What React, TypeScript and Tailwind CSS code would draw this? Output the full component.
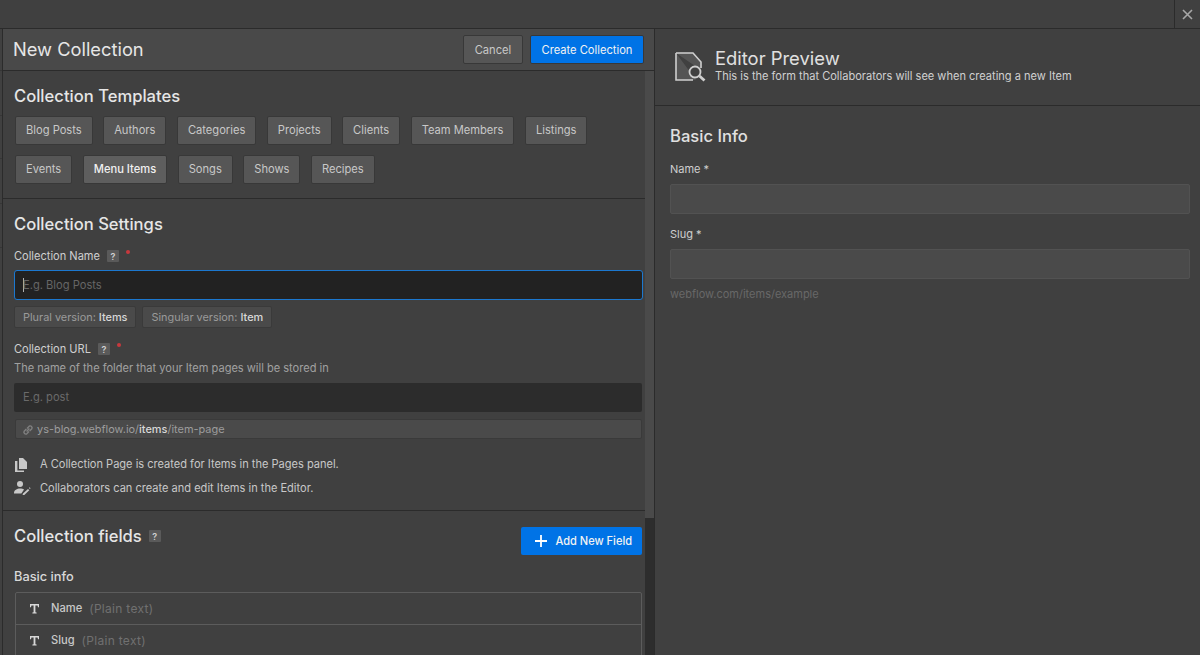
const row1 = ["Blog Posts", "Authors", "Categories", "Projects", "Clients", "Team Members", "Listings"];
const row2 = ["Events", "Menu Items", "Songs", "Shows", "Recipes"];
const sliverRows = ["h-[42px]", "h-[45px]", "h-[43px]", "h-[45px]", "h-[44px]"];

function TemplateButton({ label, active }: { label: string; active?: boolean }) {
  return (
    <div
      className={`flex h-[28.5px] items-center rounded-[2px] border border-[#383838] px-[10px] pt-px text-[11.15px] ${
        active ? "bg-[#5e5e5e] font-medium text-[#f0f0f0]" : "bg-[#565656] text-[#c8c8c8]"
      }`}
    >
      {label}
    </div>
  );
}

function Help() {
  return (
    <span className="flex h-[12px] w-[12px] items-center justify-center rounded-[1px] bg-[#5a5a5a] text-[9px] font-semibold leading-none text-[#d0d0d0]">
      ?
    </span>
  );
}

function Required() {
  return <span className="mb-[9px] h-[4px] w-[4px] rounded-full bg-[#c8383d]" />;
}

function Chip({ label, value }: { label: string; value: string }) {
  return (
    <div className="flex h-[22px] items-center gap-[3px] rounded-[2px] border border-[#3a3a3a] bg-[#4a4a4a] px-[8px] text-[10.9px] text-[#9a9a9a]">
      {label}
      <span className="font-medium text-[#d8d8d8]">{value}</span>
    </div>
  );
}

function FieldRow({ name, last }: { name: string; last?: boolean }) {
  return (
    <div className={`flex items-center border-[#5c5c5c] pl-[13px] text-[11.15px] ${last ? "h-[31px]" : "h-[32px] border-b"}`}>
      <svg width="11" height="11" viewBox="0 0 11 11" className="mr-[11px] fill-[#d8d8d8]">
        <path d="M1 1h9v3.2H9L8.6 2.6H6.4v6.6l1.2.3V10.4H3.4V9.5l1.2-.3V2.6H2.4L2 4.2H1z" />
      </svg>
      <span className="mr-[7px] font-medium text-[#c8c8c8]">{name}</span>
      <span className="text-[12px] tracking-[0.3px] text-[#707070]">(Plain text)</span>
    </div>
  );
}

export default function App() {
  return (
    <div className="flex h-[655px] w-[1200px] flex-col overflow-hidden bg-[#404040] font-['Inter',sans-serif] text-[#d9d9d9]">
      <div className="flex h-[29px] shrink-0 justify-end border-b border-[#2b2b2b]">
        <div className="flex w-[26px] items-center justify-center border-l border-[#2b2b2b]">
          <svg width="11" height="11" viewBox="0 0 11 11" className="stroke-[#a8a8a8]" strokeWidth="1.6">
            <path d="M1 1l9 9M10 1l-9 9" />
          </svg>
        </div>
      </div>

      <div className="flex min-h-0 flex-1">
        <div className="w-[3px] shrink-0 border-r border-[#2b2b2b]">
          {sliverRows.map((h, i) => (
            <div key={i} className={`${h} border-b border-[#363636]`} />
          ))}
        </div>

        <div className="flex w-[652px] shrink-0 flex-col border-r border-[#2b2b2b]">
          <div className="flex h-[42px] shrink-0 items-center justify-between border-b border-[#2b2b2b] bg-[#494949] pl-[10px] pr-[10px]">
            <div className="text-[18.3px] text-[#e6e6e6]">New Collection</div>
            <div className="flex gap-[7px]">
              <div className="flex h-[29px] w-[60px] items-center justify-center rounded-[2px] border border-[#383838] bg-[#565656] pt-px text-[11.15px] text-[#c8c8c8]">
                Cancel
              </div>
              <div className="flex h-[29px] w-[114px] items-center justify-center rounded-[2px] border border-[#383838] bg-[#0073e6] pt-px text-[11.15px] text-[#f2f2f2]">
                Create Collection
              </div>
            </div>
          </div>

          <div className="flex min-h-0 flex-1">
            <div className="min-w-0 flex-1">
              <div className="h-[128px] border-b border-[#2b2b2b] pl-[12px] pr-[2px] pt-[14px]">
                <div className="ml-[-1px] text-[16.6px] font-medium leading-[22px] text-[#e6e6e6]">Collection Templates</div>
                <div className="mt-[9px] flex gap-[10.5px]">
                  {row1.map((t) => (
                    <TemplateButton key={t} label={t} />
                  ))}
                </div>
                <div className="mt-[10.5px] flex gap-[10.5px]">
                  {row2.map((t) => (
                    <TemplateButton key={t} label={t} active={t === "Menu Items"} />
                  ))}
                </div>
              </div>

              <div className="h-[312px] border-b border-[#2b2b2b] pl-[11px] pr-[2px] pt-[14px]">
                <div className="text-[16.6px] font-medium leading-[22px] text-[#e6e6e6]">Collection Settings</div>
                <div className="mt-[14px] flex h-[14px] items-center gap-[7px] text-[11.05px] text-[#cfcfcf]">
                  Collection Name <Help /> <Required />
                </div>
                <div className="mt-[7px] flex h-[30px] items-center rounded-[3px] border border-[#1c78cf] bg-[#222222] pl-[8px] text-[11.15px] text-[#666666]">
                  <span className="mr-[-1px] h-[14px] w-px bg-[#b0b0b0]" />
                  E.g. Blog Posts
                </div>
                <div className="mt-[6px] flex gap-[6px]">
                  <Chip label="Plural version:" value="Items" />
                  <Chip label="Singular version:" value="Item" />
                </div>
                <div className="mt-[14px] flex h-[14px] items-center gap-[7px] text-[11.05px] text-[#cfcfcf]">
                  Collection URL <Help /> <Required />
                </div>
                <div className="mt-[5px] text-[11.05px] leading-[15px] text-[#a0a0a0]">
                  The name of the folder that your Item pages will be stored in
                </div>
                <div className="mr-[1px] mt-[7px] flex h-[29px] items-center rounded-[2px] bg-[#2c2c2c] pl-[9px] text-[11.15px] text-[#6a6a6a]">
                  E.g. post
                </div>
                <div className="mx-[1px] mt-[7px] flex h-[20px] items-center gap-[3px] rounded-[2px] border border-[#3a3a3a] bg-[#4a4a4a] pl-[6px] pt-px text-[10.95px] text-[#9c9c9c]">
                  <svg width="12" height="12" viewBox="0 0 12 12" fill="none" className="stroke-[#808080]" strokeWidth="1.4">
                    <path d="M4.6 7.4l2.8-2.8M4.4 5L2.2 7.2a1.9 1.9 0 0 0 2.6 2.6L7 7.6M7.6 7l2.2-2.2a1.9 1.9 0 0 0-2.6-2.6L5 4.4" />
                  </svg>
                  <span>
                    ys-blog.webflow.io/<span className="font-medium text-[#d8d8d8]">items</span>/item-page
                  </span>
                </div>
                <div className="mt-[16px] flex h-[18px] items-center pt-px text-[11.05px] text-[#c8c8c8]">
                  <svg width="12" height="14" viewBox="0 0 12 14" className="ml-[1px] mr-[13px] fill-[#c8c8c8]">
                    <path d="M4 0h4l4 4v7H4z" />
                    <path d="M0 3h2.4v9.4H9V14H0z" />
                  </svg>
                  A Collection Page is created for Items in the Pages panel.
                </div>
                <div className="mt-[6px] flex h-[18px] items-center text-[11.05px] text-[#c8c8c8]">
                  <svg width="17" height="14" viewBox="0 0 17 14" className="mr-[9px] fill-[#c8c8c8]">
                    <circle cx="6" cy="3" r="3" />
                    <path d="M0 12c0-3 3-4.6 6-4.6 1.6 0 3 .4 4 1L7.4 12.4H0z" />
                    <path d="M9 12.6l5-4.6 1.3 1.3-5 4.6-1.8.3zM15.6 6.2l1 1-.7.7-1-1z" />
                  </svg>
                  Collaborators can create and edit Items in the Editor.
                </div>
              </div>

              <div className="pl-[11px] pr-[3px]">
                <div className="flex h-[44px] items-end justify-between">
                  <div className="mb-[8px] flex items-center gap-[7px] text-[16.6px] font-medium leading-[22px] text-[#e6e6e6]">
                    Collection fields <Help />
                  </div>
                  <div className="flex h-[28px] w-[121px] items-center justify-end gap-[8px] rounded-[2px] bg-[#0073e6] pr-[10px] text-[11.05px] font-medium text-[#f2f2f2]">
                    <svg width="12" height="12" viewBox="0 0 12 12" className="stroke-white" strokeWidth="1.8">
                      <path d="M6 0v12M0 6h12" />
                    </svg>
                    Add New Field
                  </div>
                </div>
                <div className="mt-[14px] text-[12.8px] font-medium leading-[16px] text-[#d8d8d8]">Basic info</div>
                <div className="ml-[1px] mt-[7px] rounded-[2px] border border-[#5c5c5c]">
                  <FieldRow name="Name" />
                  <FieldRow name="Slug" last />
                </div>
              </div>
            </div>

            <div className="w-[9px] shrink-0 bg-[#2d2d2d]">
              <div className="h-[447px] bg-[#4a4a4a]" />
            </div>
          </div>
        </div>

        <div className="min-w-0 flex-1">
          <div className="flex h-[77px] items-center border-b border-[#2b2b2b] pl-[20px]">
            <svg width="31" height="30" viewBox="0 0 31 30" fill="none" className="mr-[9px]">
              <path d="M1 1h17l8 9v8M1 1v27h20" fill="#555555" />
              <path d="M1 1h17l8 9v6M1 1v27h17" stroke="#cfcfcf" strokeWidth="1.6" />
              <circle cx="20" cy="20" r="5.5" fill="#404040" stroke="#cfcfcf" strokeWidth="1.8" />
              <path d="M24.5 24l5 4.5" stroke="#cfcfcf" strokeWidth="2.8" />
            </svg>
            <div className="mb-[4px]">
              <div className="text-[18.4px] leading-[20px] text-[#e0e0e0]">Editor Preview</div>
              <div className="mt-[1px] text-[11.05px] leading-[14px] text-[#d0d0d0]">
                This is the form that Collaborators will see when creating a new Item
              </div>
            </div>
          </div>
          <div className="pl-[15px] pr-[10px] pt-[19px]">
            <div className="text-[16.6px] font-medium leading-[22px] text-[#e0e0e0]">Basic Info</div>
            <div className="mt-[14px] text-[11px] leading-[16px] text-[#cfcfcf]">Name *</div>
            <div className="mt-[7px] h-[30px] rounded-[2px] border border-[#525252] bg-[#4a4a4a]" />
            <div className="mt-[12px] text-[11px] leading-[16px] text-[#cfcfcf]">Slug *</div>
            <div className="mt-[7px] h-[30px] rounded-[2px] border border-[#525252] bg-[#4a4a4a]" />
            <div className="mt-[7px] text-[11px] leading-[16px] text-[#686868]">webflow.com/items/example</div>
          </div>
        </div>
      </div>
    </div>
  );
}
